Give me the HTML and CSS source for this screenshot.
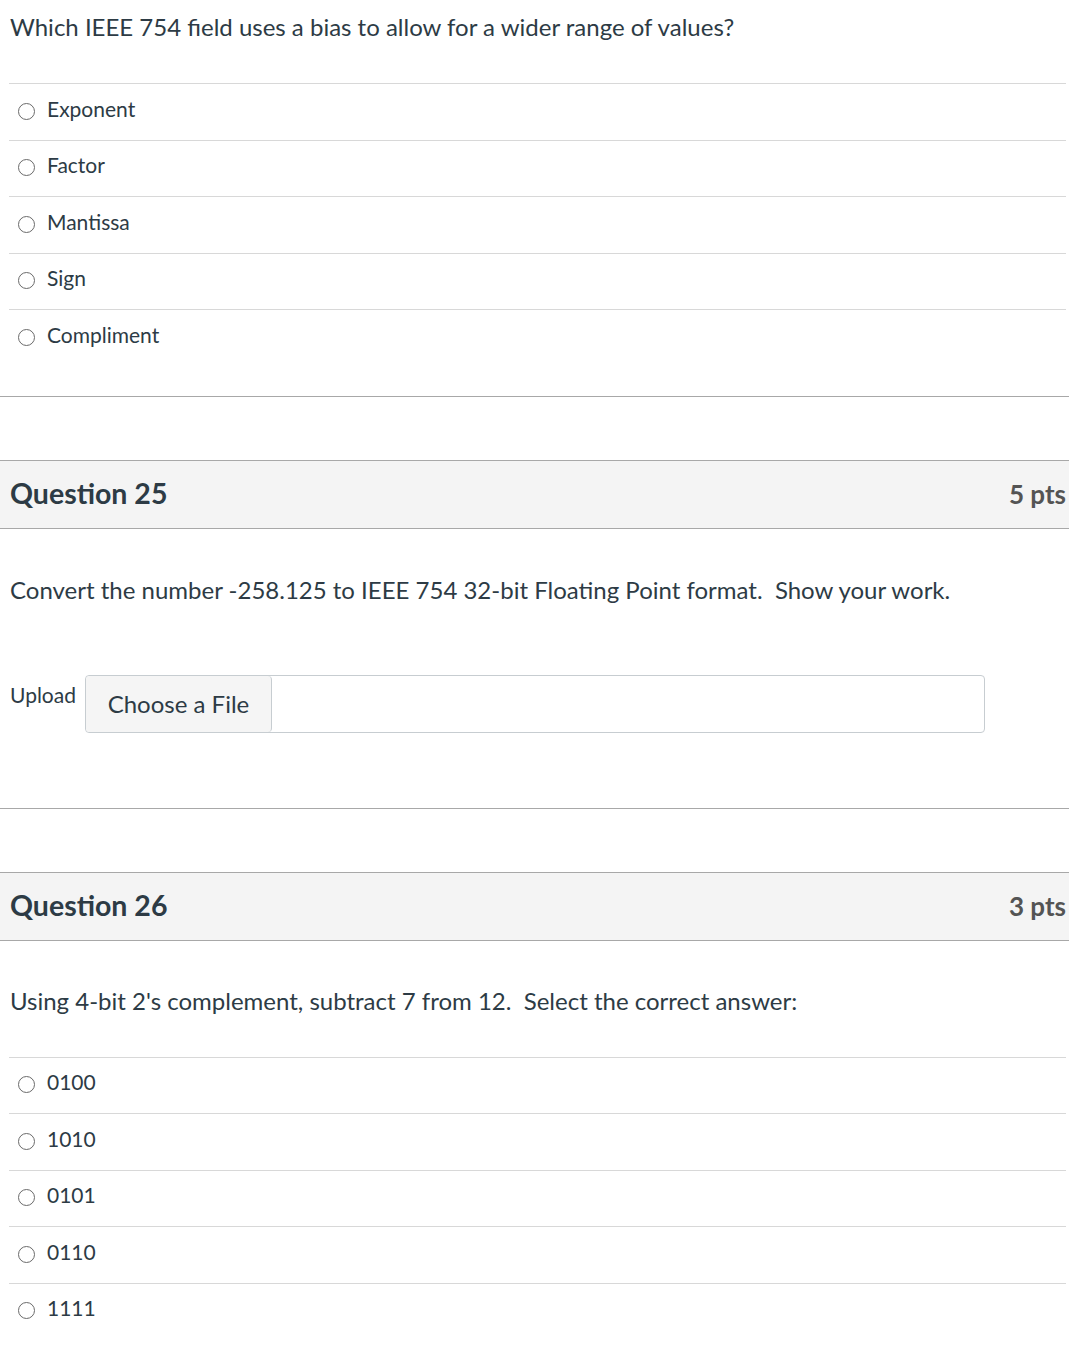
FILE: index.html
```html
<!DOCTYPE html>
<html lang="en">
<head>
<meta charset="utf-8">
<link rel="stylesheet" href="styles.css">
</head>
<body>
<div class="question first">
  <div class="q-body">
    <p class="q-text">Which IEEE 754 field uses a bias to allow for a wider range of values?</p>
    <ul class="answers">
      <li class="answer"><span class="radio"></span><span>Exponent</span></li>
      <li class="answer"><span class="radio"></span><span>Factor</span></li>
      <li class="answer"><span class="radio"></span><span>Mantissa</span></li>
      <li class="answer"><span class="radio"></span><span>Sign</span></li>
      <li class="answer"><span class="radio"></span><span>Compliment</span></li>
    </ul>
  </div>
</div>

<div class="question">
  <div class="q-header"><h2>Question 25</h2><span class="pts">5 pts</span></div>
  <div class="q-body">
    <p class="q-text q-text-mid">Convert the number -258.125 to IEEE 754 32-bit Floating Point format.&nbsp; Show your work.</p>
    <div class="upload">
      <span class="upload-label">Upload</span>
      <div class="file-box"><span class="file-btn">Choose a File</span></div>
    </div>
  </div>
</div>

<div class="question">
  <div class="q-header"><h2>Question 26</h2><span class="pts">3 pts</span></div>
  <div class="q-body">
    <p class="q-text q-text-mid2">Using 4-bit 2's complement, subtract 7 from 12.&nbsp; Select the correct answer:</p>
    <ul class="answers">
      <li class="answer"><span class="radio"></span><span>0100</span></li>
      <li class="answer"><span class="radio"></span><span>1010</span></li>
      <li class="answer"><span class="radio"></span><span>0101</span></li>
      <li class="answer"><span class="radio"></span><span>0110</span></li>
      <li class="answer"><span class="radio"></span><span>1111</span></li>
    </ul>
  </div>
</div>
</body>
</html>
```

FILE: styles.css
```css
html, body {
  margin: 0;
  padding: 0;
  background: #ffffff;
}
body {
  font-family: Lato, "Noto Sans", sans-serif;
  color: #2d3b45;
  width: 1069px;
}
.question {
  border-bottom: 1px solid #a8a8a8;
}
.question + .question {
  margin-top: 63px;
}
.question:last-child {
  border-bottom: none;
}
.q-header {
  display: flex;
  justify-content: space-between;
  align-items: center;
  height: 67px;
  background: #f4f4f4;
  border-top: 1px solid #a8a8a8;
  border-bottom: 1px solid #a8a8a8;
  padding: 0 3px 0 10px;
}
.q-header h2 {
  margin: 0;
  font-size: 28.5px;
  font-weight: 700;
  color: #2d3b45;
  margin-top: -2px;
}
.pts {
  font-size: 26px;
  font-weight: 700;
  color: #545454;
}
.q-text {
  margin: 0;
  padding: 12px 0 0 10px;
  font-size: 24px;
  line-height: 30px;
  height: 71px;
}
.q-text-mid {
  padding-top: 46px;
  height: 100px;
}
.q-text-mid2 {
  padding-top: 45px;
  height: 71px;
}
.answers {
  list-style: none;
  margin: 0 3px 0 9px;
  padding: 0 0 30px 0;
}
.answer {
  display: flex;
  align-items: center;
  gap: 12px;
  height: 56.5px;
  box-sizing: border-box;
  border-top: 1px solid #d8d8d8;
  padding-left: 8px;
  font-size: 21px;
}
.answer span:last-child {
  margin-top: -7px;
}
.radio {
  width: 15px;
  height: 15px;
  border: 1.6px solid #6a6a6a;
  border-radius: 50%;
  flex: none;
  margin-left: 1px;
  margin-top: -1px;
}
.upload {
  display: flex;
  align-items: flex-start;
  gap: 9px;
  padding: 0 0 75px 10px;
}
.upload-label {
  font-size: 21px;
  margin-top: 7px;
}
.file-box {
  width: 898px;
  height: 56px;
  border: 1px solid #c7cdd1;
  border-radius: 4px;
  display: flex;
}
.file-btn {
  display: flex;
  align-items: center;
  justify-content: center;
  width: 185px;
  height: 56px;
  background: #f5f5f5;
  border-right: 1px solid #c7cdd1;
  border-radius: 4px;
  font-size: 24px;
  color: #2d3b45;
}
```
